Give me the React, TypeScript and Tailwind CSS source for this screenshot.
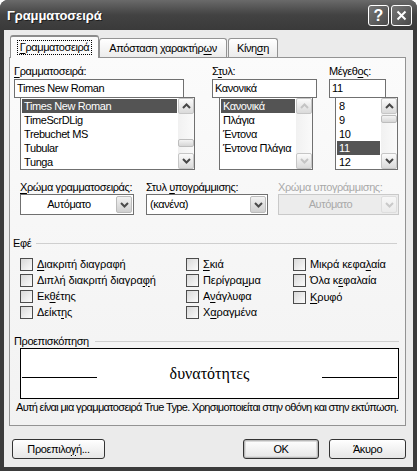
import React from "react";

function U({ t, i }: { t: string; i: number }) {
  const c = Array.from(t);
  if (i < 0) return <span>{t}</span>;
  return (
    <span className="whitespace-pre">
      {c.slice(0, i).join("")}
      <span className="underline decoration-1 underline-offset-[2px]">{c[i]}</span>
      {c.slice(i + 1).join("")}
    </span>
  );
}

function Chevron({ up, color }: { up?: boolean; color: string }) {
  return (
    <svg width="9" height="6" viewBox="0 0 9 6">
      <path
        d={up ? "M1 5 L4.5 1.5 L8 5" : "M1 1 L4.5 4.5 L8 1"}
        fill="none"
        stroke={color}
        strokeWidth="2"
      />
    </svg>
  );
}

function SBtn({ up, disabled }: { up?: boolean; disabled?: boolean }) {
  return (
    <div className="w-[16px] h-[16px] shrink-0 flex items-center justify-center rounded-[2px] border border-[#c6c6c6] bg-linear-to-b from-[#fbfbfb] to-[#dadada]">
      <Chevron up={up} color={disabled ? "#c4c4c4" : "#474747"} />
    </div>
  );
}

function ScrollBar({ thumb, disabled }: { thumb?: number; disabled?: boolean }) {
  return (
    <div className="w-[16px] shrink-0 flex flex-col bg-linear-to-r from-[#f1f1f1] to-[#fafafa]">
      <SBtn up disabled={disabled} />
      <div className="flex-1 flex flex-col">
        {thumb !== undefined && (
          <div
            className="h-[8px] rounded-[2px] border border-[#bdbdbd] bg-linear-to-b from-[#f4f4f4] to-[#d6d6d6]"
            style={{ marginTop: thumb }}
          />
        )}
      </div>
      <SBtn disabled={disabled} />
    </div>
  );
}

function ListBox({
  items,
  sel,
  cls,
  thumb,
  disabled,
}: {
  items: string[];
  sel: number;
  cls: string;
  thumb?: number;
  disabled?: boolean;
}) {
  return (
    <div className={`-mt-px h-[73px] flex border border-[#707070] bg-white ${cls}`}>
      <div className="flex-1 flex flex-col pt-px pl-px pr-px">
        {items.map((it, k) => (
          <div
            key={k}
            className={`h-[14px] flex items-center pl-[2px] whitespace-nowrap ${
              k === sel ? "bg-[#545454] text-white" : ""
            }`}
          >
            {it}
          </div>
        ))}
      </div>
      <ScrollBar thumb={thumb} disabled={disabled} />
    </div>
  );
}

function Combo({
  text,
  center,
  disabled,
}: {
  text: string;
  center?: boolean;
  disabled?: boolean;
}) {
  return (
    <div
      className={`h-[21px] flex border p-px ${
        disabled ? "border-[#c9c9c9] bg-[#ececec] text-[#a9a9a9]" : "border-[#707070] bg-white"
      }`}
    >
      <div className={`flex-1 flex items-center px-[2px] ${center ? "justify-center" : ""}`}>{text}</div>
      <div
        className={`w-[16px] flex items-center justify-center rounded-[2px] border ${
          disabled
            ? "border-[#dedede] bg-linear-to-b from-[#f7f7f7] to-[#ebebeb]"
            : "border-[#bcbcbc] bg-linear-to-b from-[#f2f2f2] to-[#cfcfcf]"
        }`}
      >
        <Chevron color={disabled ? "#c9c9c9" : "#4a4a4a"} />
      </div>
    </div>
  );
}

function Check({ t, i }: { t: string; i: number }) {
  return (
    <div className="h-[16px] flex items-center whitespace-nowrap">
      <div className="w-[13px] h-[13px] shrink-0 border border-[#4c4c4c] bg-linear-to-br from-[#d9d9d9] to-[#fbfbfb]" />
      <span className="ml-[4px] tracking-[-0.1px]">
        <U t={t} i={i} />
      </span>
    </div>
  );
}

function Btn({ children, cls, def }: { children: React.ReactNode; cls: string; def?: boolean }) {
  return (
    <div
      className={`h-[20px] flex items-center justify-center rounded-[3px] border border-[#333333] bg-linear-to-b from-[#ffffff] to-[#e6e6e6] ${
        def ? "shadow-[inset_0_0_0_1px_#b9b9b9,inset_0_0_0_2px_#dcdcdc]" : ""
      } ${cls}`}
    >
      {children}
    </div>
  );
}

export default function App() {
  return (
    <div className="w-[417px] h-[471px] bg-white font-['Liberation_Sans',Arial,sans-serif] text-[11px] leading-[13px] tracking-[-0.4px] text-black">
      <div className="w-[417px] h-[471px] flex flex-col rounded-t-[8px] overflow-hidden bg-[#3b3b3b]">
        {/* title bar */}
        <div className="h-[30px] shrink-0 flex items-center pl-[7px] pr-[5px] bg-linear-to-b from-[#6a6a6a] via-[#424242] to-[#3a3a3a]">
          <span className="text-white font-bold text-[13px] tracking-[-0.1px] [text-shadow:1px_1px_0_#1e1e1e]">
            Γραμματοσειρά
          </span>
          <div className="ml-auto flex gap-[2px] mt-[1px]">
            <div className="w-[21px] h-[21px] rounded-[3px] border border-white bg-linear-to-br from-[#767676] to-[#4a4a4a] flex items-center justify-center text-white font-bold text-[16px] leading-none tracking-normal">
              ?
            </div>
            <div className="w-[21px] h-[21px] rounded-[3px] border border-white bg-linear-to-br from-[#767676] to-[#4a4a4a] flex items-center justify-center">
              <svg width="11" height="11" viewBox="0 0 11 11">
                <path d="M1.5 1.5 L9.5 9.5 M9.5 1.5 L1.5 9.5" stroke="#ffffff" strokeWidth="2" />
              </svg>
            </div>
          </div>
        </div>

        {/* body */}
        <div className="flex-1 mx-[4px] mb-[4px] bg-[#ebebeb] flex flex-col">
          {/* tabs */}
          <div className="h-[27px] shrink-0 flex items-end pl-[6px]">
            <div className="relative z-10 -mb-px w-[89px] h-[23px] flex items-center justify-center rounded-t-[3px] border border-b-0 border-[#939393] border-t-2 border-t-[#8c8c8c] bg-[#fbfbfb]">
              <span className="outline outline-1 outline-dotted outline-black px-[2px] leading-[13px]">
                <U t="Γραμματοσειρά" i={0} />
              </span>
            </div>
            <div className="w-[128px] h-[19px] flex items-center justify-center rounded-t-[3px] border border-b-0 border-[#939393] bg-linear-to-b from-[#ffffff] to-[#ececec]">
              <U t="Απόσταση χαρακτήρων" i={17} />
            </div>
            <div className="ml-px w-[50px] h-[19px] flex items-center justify-center rounded-t-[3px] border border-b-0 border-[#939393] bg-linear-to-b from-[#ffffff] to-[#ececec]">
              <U t="Κίνηση" i={4} />
            </div>
          </div>

          {/* panel */}
          <div className="ml-[5px] w-[397px] h-[369px] shrink-0 border border-[#939393] bg-linear-to-b from-[#fbfbfb] to-[#f2f2f2] flex flex-col">
            {/* row 1 */}
            <div className="flex pt-[6px] pl-[4px]">
              <div className="w-[181px] flex flex-col">
                <div className="h-[14px] mb-px flex items-center">
                  <U t="Γραμματοσειρά:" i={0} />
                </div>
                <div className="w-[170px] h-[19px] flex items-center px-[2px] border border-[#707070] bg-white">
                  Times New Roman
                </div>
                <ListBox
                  cls="ml-[6px] w-[175px]"
                  items={["Times New Roman", "TimeScrDLig", "Trebuchet MS", "Tubular", "Tunga"]}
                  sel={0}
                  thumb={25}
                />
              </div>
              <div className="ml-[17px] w-[105px] flex flex-col">
                <div className="h-[14px] mb-px flex items-center">
                  <U t="Στυλ:" i={1} />
                </div>
                <div className="w-[105px] h-[19px] flex items-center px-[2px] border border-[#707070] bg-white">
                  Κανονικά
                </div>
                <ListBox
                  cls="ml-[7px] w-[94px]"
                  items={["Κανονικά", "Πλάγια", "Έντονα", "Έντονα Πλάγια"]}
                  sel={0}
                  disabled
                />
              </div>
              <div className="ml-[12px] w-[69px] flex flex-col">
                <div className="h-[14px] mb-px flex items-center">
                  <U t="Μέγεθος:" i={5} />
                </div>
                <div className="w-[57px] h-[19px] flex items-center px-[2px] border border-[#707070] bg-white">
                  11
                </div>
                <ListBox cls="ml-[6px] w-[63px]" items={["8", "9", "10", "11", "12"]} sel={3} thumb={1} />
              </div>
            </div>

            {/* row 2 */}
            <div className="flex mt-[10px] pl-[10px]">
              <div className="w-[114px] flex flex-col">
                <div className="h-[14px] flex items-center whitespace-nowrap">
                  <U t="Χρώμα γραμματοσειράς:" i={0} />
                </div>
                <Combo text="Αυτόματο" center />
              </div>
              <div className="ml-[12px] w-[122px] flex flex-col">
                <div className="h-[14px] flex items-center whitespace-nowrap">
                  <U t="Στυλ υπογράμμισης:" i={5} />
                </div>
                <Combo text="(κανένα)" />
              </div>
              <div className="ml-[10px] w-[121px] flex flex-col">
                <div className="h-[14px] flex items-center whitespace-nowrap text-[#a9a9a9]">
                  Χρώμα υπογράμμισης:
                </div>
                <Combo text="Αυτόματο" center disabled />
              </div>
            </div>

            {/* effects */}
            <div className="mt-[21px] h-[14px] flex items-center pl-[3px] pr-[8px]">
              <span>Εφέ</span>
              <div className="flex-1 ml-[5px] h-px bg-[#cfcfcf]" />
            </div>
            <div className="mt-[6px] pl-[10px] flex">
              <div className="w-[166px] flex flex-col">
                <Check t="Διακριτή διαγραφή" i={0} />
                <Check t="Διπλή διακριτή διαγραφή" i={21} />
                <Check t="Εκθέτης" i={2} />
                <Check t="Δείκτης" i={5} />
              </div>
              <div className="w-[107px] flex flex-col">
                <Check t="Σκιά" i={0} />
                <Check t="Περίγραμμα" i={7} />
                <Check t="Ανάγλυφα" i={1} />
                <Check t="Χαραγμένα" i={1} />
              </div>
              <div className="flex-1 flex flex-col">
                <Check t="Μικρά κεφαλαία" i={10} />
                <Check t="Όλα κεφαλαία" i={5} />
                <div className="mt-px">
                  <Check t="Κρυφό" i={0} />
                </div>
              </div>
            </div>

            {/* preview */}
            <div className="mt-[14px] h-[14px] flex items-center pl-[4px] pr-[6px]">
              <span>Προεπισκόπηση</span>
              <div className="flex-1 ml-[6px] h-px bg-[#cfcfcf]" />
            </div>
            <div className="ml-[10px] w-[379px] h-[51px] border border-black bg-white flex items-center px-px">
              <div className="w-[75px] h-px bg-black mt-[8px]" />
              <div className="flex-1 text-center font-['Liberation_Serif','Times_New_Roman',serif] text-[16px] leading-[18px] tracking-normal">
                δυνατότητες
              </div>
              <div className="w-[75px] h-px bg-black mt-[8px]" />
            </div>
            <div className="mt-px h-[14px] flex items-center pl-[6px] whitespace-nowrap tracking-[-0.65px]">
              Αυτή είναι μια γραμματοσειρά True Type. Χρησιμοποιείται στην οθόνη και στην εκτύπωση.
            </div>
          </div>

          {/* buttons */}
          <div className="mt-[13px] flex pl-[8px] pr-[7px]">
            <Btn cls="w-[93px]">
              <U t="Προεπιλογή..." i={8} />
            </Btn>
            <Btn cls="ml-auto w-[76px]" def>
              OK
            </Btn>
            <Btn cls="ml-[10px] w-[77px]">Άκυρο</Btn>
          </div>
        </div>
      </div>
    </div>
  );
}
